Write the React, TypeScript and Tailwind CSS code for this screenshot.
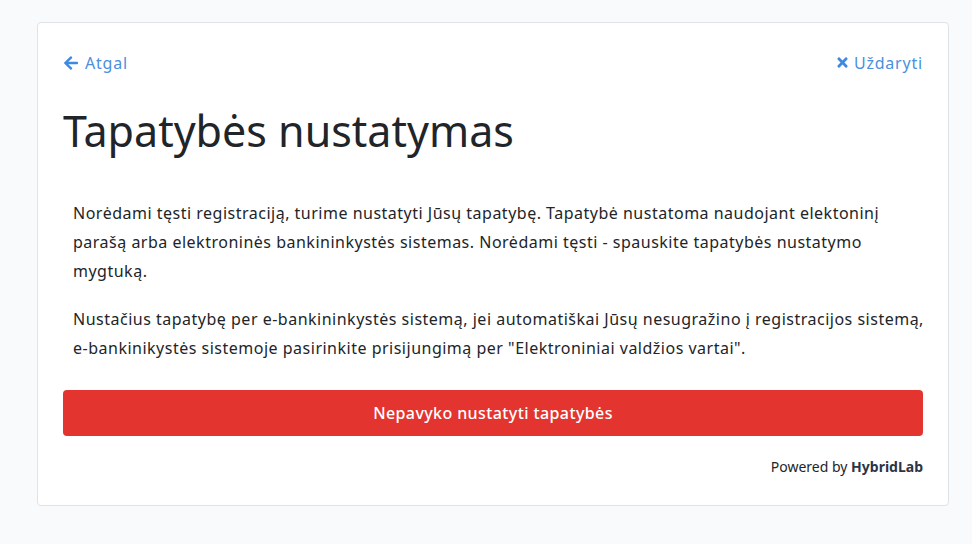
import React from "react";
import { FaArrowLeft, FaTimes } from "react-icons/fa";

export default function App() {
  return (
    <div
      className="min-h-[544px] w-full bg-[#f8fafc] pt-[22px] pl-[37px] pr-[23px] pb-[38px]"
      style={{ fontFamily: '"Noto Sans", "DejaVu Sans", sans-serif' }}
    >
      <div className="rounded-[4px] border border-[#dfe3e8] bg-white px-[25px] pt-[25px] pb-[28px]">
        <div className="flex h-[29px] items-center justify-between text-[16px] tracking-[0.8px] text-[#4a8fe0]">
          <a className="flex items-center gap-[6px]" href="#">
            <FaArrowLeft className="h-[16px] w-[16px] text-[#3d8ae0]" />
            <span>Atgal</span>
          </a>
          <a className="flex items-center gap-[5px]" href="#">
            <FaTimes className="h-[15px] w-[13px] text-[#3d8ae0]" />
            <span>Uždaryti</span>
          </a>
        </div>
        <h1 className="mt-[27px] text-[43px] leading-[53px] font-normal text-[#212529]">
          Tapatybės nustatymas
        </h1>
        <div className="mt-[42px] whitespace-nowrap px-[10px] text-[16px] leading-[29px] tracking-[0.5px] text-[#212529]">
          <p className="mb-[19px]">
            Norėdami tęsti registraciją, turime nustatyti Jūsų tapatybę. Tapatybė nustatoma naudojant elektoninį
            <br />
            parašą arba elektroninės bankininkystės sistemas. Norėdami tęsti - spauskite tapatybės nustatymo
            <br />
            mygtuką.
          </p>
          <p>
            Nustačius tapatybę per e-bankininkystės sistemą, jei automatiškai Jūsų nesugražino į registracijos sistemą,
            <br />
            e-bankinikystės sistemoje pasirinkite prisijungimą per "Elektroniniai valdžios vartai".
          </p>
        </div>
        <button className="mt-[27px] flex h-[46px] w-full items-center justify-center rounded-[4px] bg-[#e3342f] text-[16px] font-medium tracking-[0.4px] text-white">
          Nepavyko nustatyti tapatybės
        </button>
        <div className="mt-[21px] flex justify-end text-[14px] leading-[20px] text-[#212529]">
          <span>
            Powered by <span className="font-bold text-[#2a3447]">HybridLab</span>
          </span>
        </div>
      </div>
    </div>
  );
}
